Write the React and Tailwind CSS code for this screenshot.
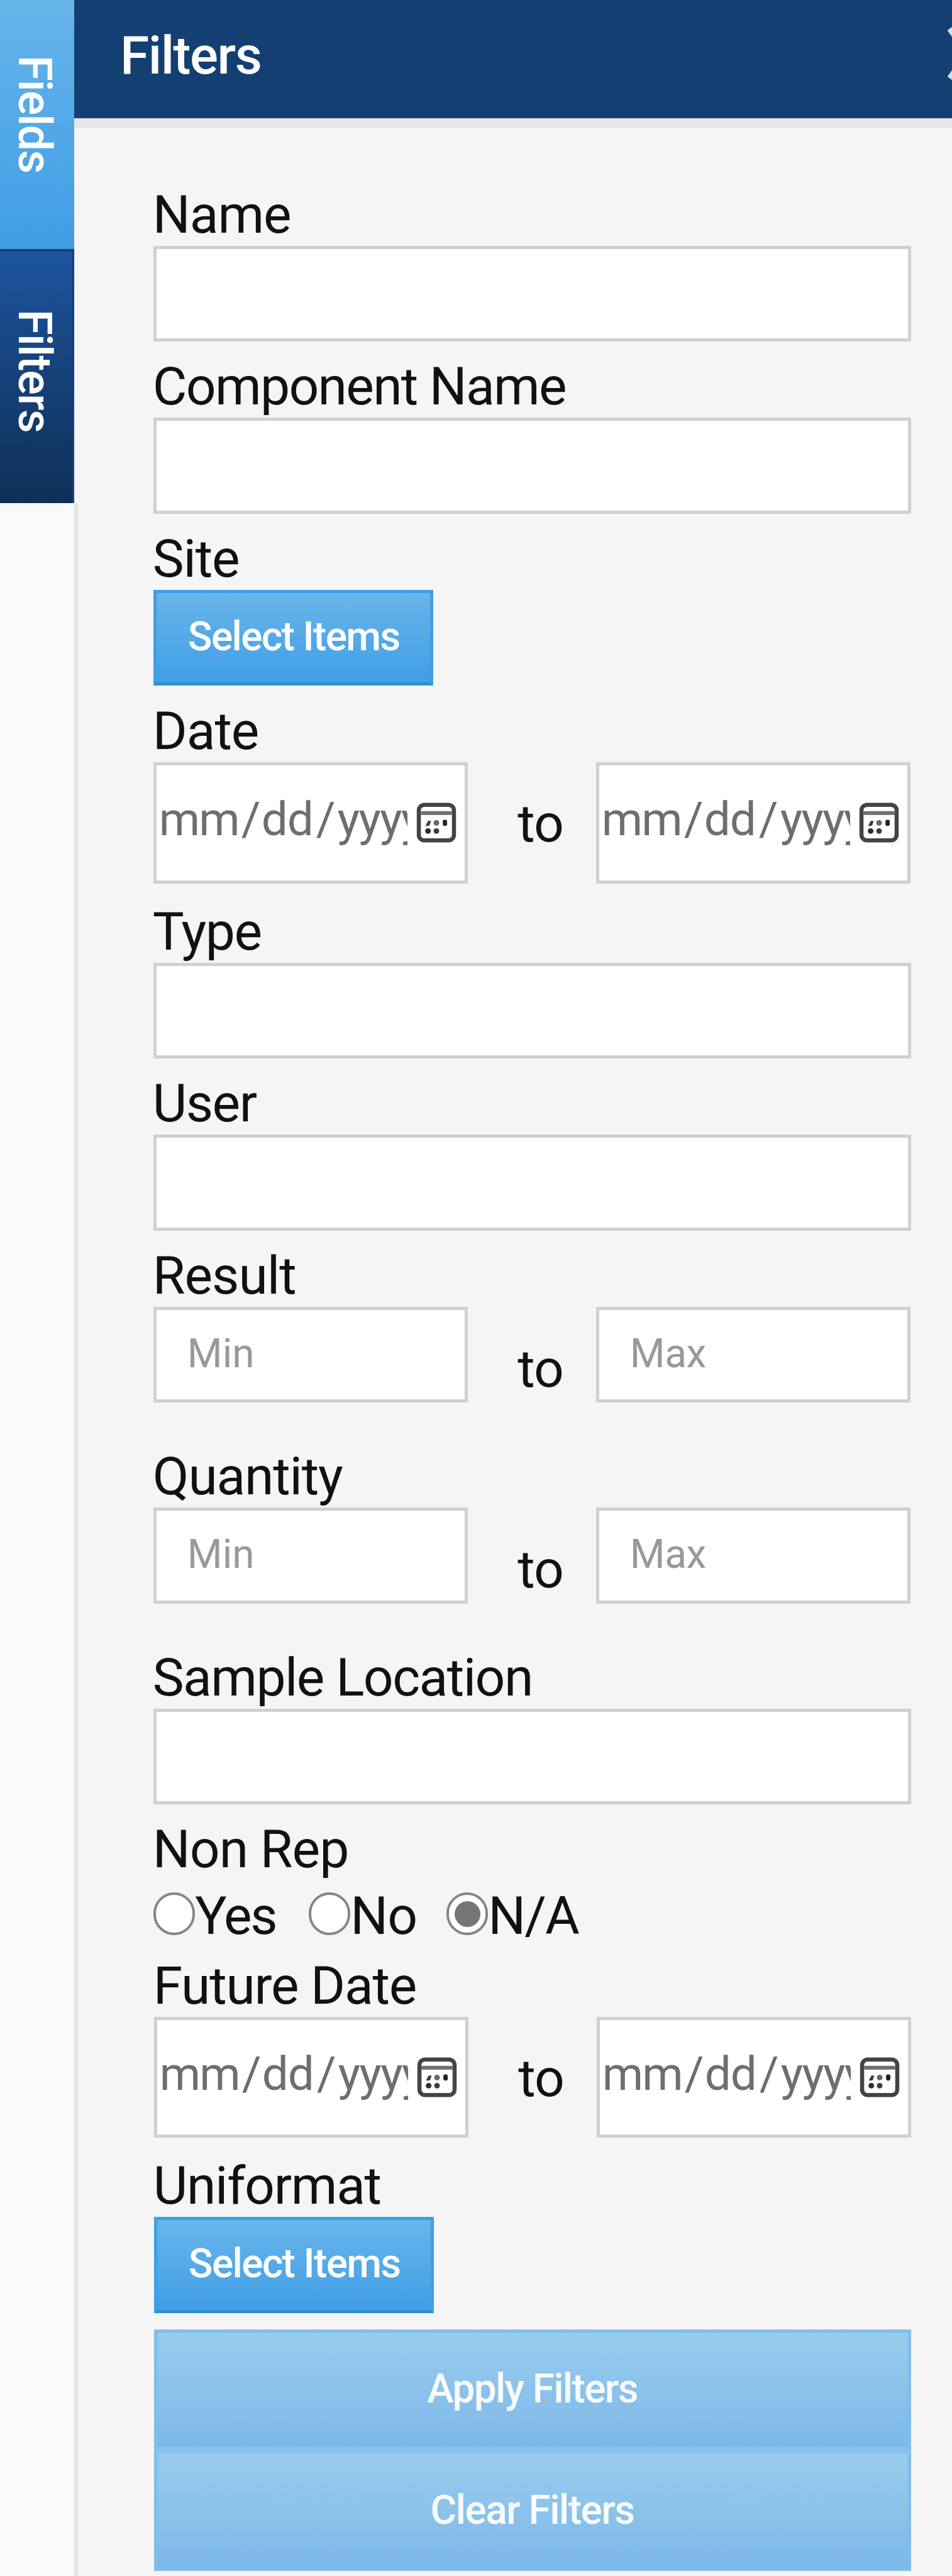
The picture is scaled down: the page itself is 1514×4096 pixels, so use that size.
function Label({ children, className = "" }) {
  return (
    <div className="flex h-[121.6px] items-end pb-[7px]">
      <span className={`-ml-[1px] whitespace-nowrap text-[84px] leading-[84px] ${className}`}>{children}</span>
    </div>
  );
}

function TextField({ label, className }) {
  return (
    <div>
      <Label className={className}>{label}</Label>
      <div className="h-[152.2px] w-full border-[5px] border-[#d0d0d0] bg-white" />
    </div>
  );
}

function SelectButton() {
  return (
    <button className="block h-[152.2px] w-[445px] border-[5px] border-[#3f9fe4] border-b-[#2f8dd6] bg-linear-to-b from-[#68b5ea] to-[#3f9ee5] pt-[37.5px] pl-[50px] text-left align-top text-[64px] leading-[64px] font-medium tracking-[-1.65px] text-white">
      <span className="block h-full whitespace-nowrap">Select Items</span>
    </button>
  );
}

function CalendarIcon() {
  return (
    <svg viewBox="0 0 79 79" className="mt-[59px] ml-[14.5px] h-[64px] w-[64px] shrink-0">
      <rect x="5" y="4.5" width="69" height="70" rx="11" fill="white" stroke="#444" strokeWidth="8" />
      <rect x="9" y="17" width="61" height="7.5" fill="#707070" />
      <path d="M18 46l5-10h6l-3 9-3 1z" fill="#3c3c3c" />
      <circle cx="39.500" cy="40" r="5.500" fill="#666" />
      <rect x="52" y="34" width="8.500" height="12" rx="3" fill="#222" />
      <circle cx="23" cy="56" r="5.500" fill="#2c2c2c" />
      <circle cx="39.500" cy="56" r="5.500" fill="#3c3c3c" />
    </svg>
  );
}

function DateBox() {
  return (
    <div className="flex h-[192.800px] w-[500.500px] shrink-0 border-[5px] border-[#d0d0d0] bg-white">
      <div className="flex w-[399px] shrink-0 overflow-hidden pt-[48px] pl-[4px] text-[74.5px] leading-[76px] text-[#6e6e6e]">
        <span className="w-[131px] shrink-0 tracking-[-2px]">mm</span>
        <span className="w-[32px] shrink-0">/</span>
        <span className="w-[87px] shrink-0 tracking-[-1px]">dd</span>
        <span className="w-[34px] shrink-0">/</span>
        <span className="shrink-0 tracking-[-1.500px]">yyyy</span>
      </div>
      <CalendarIcon />
    </div>
  );
}

function RangeBox({ text, className = "" }) {
  return (
    <div className="h-[152.200px] w-[500.500px] shrink-0 border-[5px] border-[#d0d0d0] bg-white pt-[38px] pl-[49px]">
      <span className={`block text-[64px] leading-[64px] text-[#999] ${className}`}>{text}</span>
    </div>
  );
}

function To() {
  return <div className="w-[203.500px] shrink-0 pt-[56.5px] pl-[79px] text-[84px] leading-[84px] tracking-[-1px]">to</div>;
}

function DateRange({ label, className }) {
  return (
    <div>
      <Label className={className}>{label}</Label>
      <div className="flex h-[197.100px]">
        <DateBox />
        <To />
        <DateBox />
      </div>
    </div>
  );
}

function NumberRange({ label, className }) {
  return (
    <div>
      <Label className={className}>{label}</Label>
      <div className="flex h-[197.600px]">
        <RangeBox text="Min" />
        <To />
        <RangeBox text="Max" className="tracking-[-0.5px]" />
      </div>
    </div>
  );
}

function Radio({ label, checked, className }) {
  return (
    <label className={`flex shrink-0 ${className}`}>
      <span className="mt-[4px] flex h-[68px] w-[66.5px] shrink-0 items-center justify-center rounded-full border-[4px] border-[#858585] bg-white">
        {checked && <span className="h-[41px] w-[41px] rounded-full bg-[#757575]" />}
      </span>
      <span className="whitespace-nowrap">{label}</span>
    </label>
  );
}

export default function App() {
  return (
    <div className="flex h-[4096px] w-[1514px] overflow-hidden bg-[#f5f5f5] font-['Roboto',sans-serif] text-[#111]">
      <aside className="relative z-10 flex w-[117.500px] shrink-0 flex-col">
        <div className="h-[396px] shrink-0 bg-linear-to-b from-[#66b4ea] to-[#3f9ee5] pt-[87.5px] pl-[17.5px]">
          <span className="block text-[74px] leading-[74px] font-medium tracking-[-1.900px] text-white [writing-mode:vertical-rl]">Fields</span>
        </div>
        <div className="h-[404.400px] shrink-0 border-t-[4px] border-r-[3px] border-[#123f78] bg-linear-to-b from-[#1c549e] to-[#0e3056] pt-[91.5px] pl-[17.5px]">
          <span className="block text-[74px] leading-[74px] font-medium tracking-[-1.700px] text-white [writing-mode:vertical-rl]">Filters</span>
        </div>
        <div className="w-[123.500px] flex-1 border-r-[6px] border-[#e5e5e5] bg-[#faf9f7]" />
      </aside>
      <section className="w-[1396.500px] shrink-0">
        <header className="flex h-[188px] justify-between overflow-hidden bg-[#143f73] pt-[47px] pl-[73.500px]">
          <h1 className="text-[84px] leading-[84px] font-medium tracking-[-1.500px] text-white">Filters</h1>
          <svg viewBox="0 0 66 94" className="-mt-[9px] -mr-[59px] h-[94px] w-[66px] shrink-0">
            <path d="M4 7L62 87M62 7L4 87" stroke="#cfdfee" strokeWidth="11" fill="none" />
          </svg>
        </header>
        <div className="h-[15px] bg-[#e6e6e6]" />
        <main className="w-[1331px] pt-[66px] pl-[126.300px]">
          <TextField label="Name" className="tracking-[-1px]" />
          <TextField label="Component Name" className="tracking-[-1.700px]" />
          <Label className="tracking-[-1.200px]">Site</Label>
          <SelectButton />
          <DateRange label="Date" className="tracking-[-1.100px]" />
          <TextField label="Type" className="tracking-[-1.500px]" />
          <TextField label="User" className="tracking-[-1.500px]" />
          <NumberRange label="Result" className="tracking-[-1px]" />
          <NumberRange label="Quantity" className="tracking-[-1.200px]" />
          <TextField label="Sample Location" className="tracking-[-1.550px]" />
          <Label className="tracking-[-1px]">Non Rep</Label>
          <div className="flex h-[94.700px] pt-[15px] text-[84px] leading-[84px]">
            <Radio label="Yes" className="w-[247px] tracking-[-2.200px]" />
            <Radio label="No" className="w-[219px] tracking-[-1px]" />
            <Radio label="N/A" checked className="tracking-[-2px]" />
          </div>
          <div className="ml-[1px]">
            <DateRange label="Future Date" className="tracking-[-1.200px]" />
            <Label className="tracking-[-1.300px]">Uniformat</Label>
            <SelectButton />
            <div className="mt-[26px] text-center text-[64px] leading-[64px] font-medium text-[#f8fafc]">
              <button className="block h-[192px] w-full border-[5px] border-b-[6px] border-[#80beea] border-b-[#86c2ec] bg-linear-to-b from-[#99cced] to-[#7db9e8] pb-[1px] tracking-[-1.670px]">Apply Filters</button>
              <button className="block h-[192px] w-full border-[5px] border-[#80beea] border-t-[#86c2ec] bg-linear-to-b from-[#99cced] to-[#7db9e8] tracking-[-1.560px]">Clear Filters</button>
            </div>
          </div>
        </main>
      </section>
    </div>
  );
}
